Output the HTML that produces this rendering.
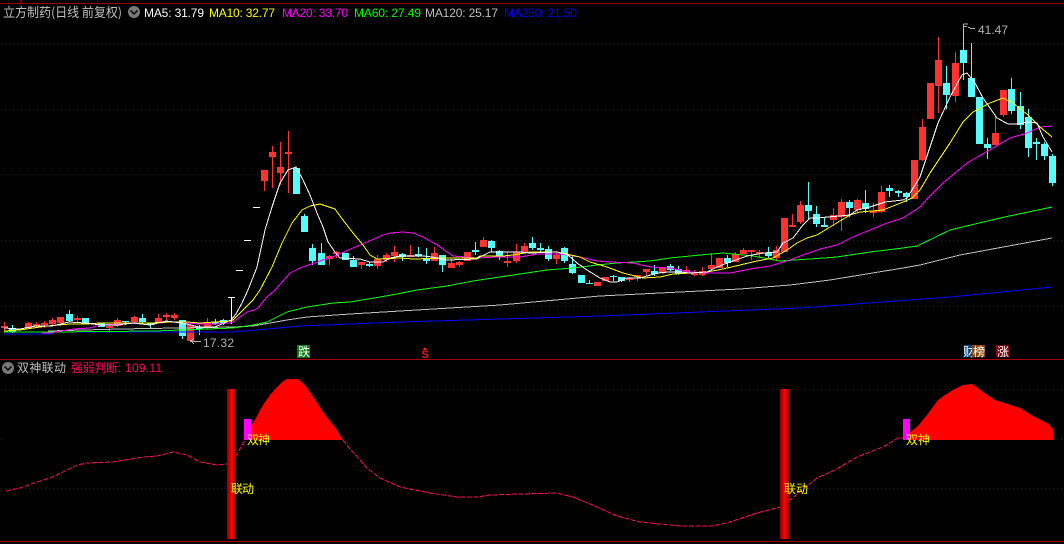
<!DOCTYPE html>
<html lang="zh">
<head>
<meta charset="utf-8">
<title>立方制药</title>
<style>
html,body{margin:0;padding:0;background:#000;width:1064px;height:544px;overflow:hidden}
svg{display:block}
text{font-family:"Liberation Sans","WenQuanYi Zen Hei","Noto Sans CJK SC",sans-serif}
.c{font-family:"WenQuanYi Zen Hei","Noto Sans CJK SC",sans-serif}
.l{fill:none;shape-rendering:crispEdges}
</style>
</head>
<body>
<svg width="1064" height="544" viewBox="0 0 1064 544" xmlns="http://www.w3.org/2000/svg">
<defs>
<linearGradient id="bar" x1="0" x2="1" y1="0" y2="0">
<stop offset="0" stop-color="#900000"/><stop offset=".3" stop-color="#c80000"/><stop offset=".45" stop-color="#ff0000"/><stop offset=".6" stop-color="#ff0000"/><stop offset=".75" stop-color="#c00000"/><stop offset="1" stop-color="#a00000"/>
</linearGradient>
<pattern id="dots" width="4" height="1" patternUnits="userSpaceOnUse" x="1" y="0">
<rect width="1" height="1" fill="#8a0000"/>
</pattern>
</defs>
<rect width="1064" height="544" fill="#000"/>
<!-- frame -->
<path d="M0 3.5H1064M20.5 0V3" stroke="#a00000" stroke-width="1" shape-rendering="crispEdges"/>
<path d="M0 359.5H1064M0 541.5H1064" stroke="#a80000" stroke-width="1" shape-rendering="crispEdges"/>
<!-- grid -->
<g fill="url(#dots)" shape-rendering="crispEdges">
<rect x="0" y="43" width="1064" height="1"/>
<rect x="0" y="109" width="1064" height="1"/>
<rect x="0" y="174" width="1064" height="1"/>
<rect x="0" y="240" width="1064" height="1"/>
<rect x="0" y="306" width="1064" height="1"/>
<rect x="0" y="389" width="1064" height="1"/>
<rect x="0" y="488" width="400" height="1"/>
<rect x="808" y="488" width="256" height="1"/>
<rect x="0" y="439" width="4" height="1"/>
<rect x="1052" y="439" width="12" height="1"/>
</g>

<!-- red wicks -->
<path shape-rendering="crispEdges" stroke="#ff3232" stroke-width="1" fill="none" d="M4.5 322V332M28.5 322V329M36.5 322V327M44.5 321V328M52.5 318V326M77.5 316V323M109.5 324V331M117.5 318V327M134.5 316V323M158.5 314V323M166.5 313V320M174.5 313V320M190.5 322V342M207.5 318V329M264.5 170V191M272.5 146V188M280.5 142V185M288.5 131V193M329.5 255V265M336.5 251V258M361.5 262V269M377.5 255V269M386.5 253V262M394.5 246V262M410.5 245V257M434.5 247V261M451.5 259V268M459.5 261V267M483.5 237V247M507.5 252V267M516.5 244V263M524.5 243V253M556.5 251V264M629.5 277V282M637.5 275V281M646.5 269V276M662.5 267V274M686.5 266V274M694.5 270V276M702.5 267V276M711.5 253V271M735.5 252V262M743.5 248V254M751.5 250V260M759.5 250V257M776.5 246V260M792.5 214V227M800.5 201V224M833.5 208V226M841.5 199V231M857.5 199V212M873.5 203V217M881.5 186V213M922.5 119V161M938.5 37V113M955.5 52V102M995.5 116V145M1003.5 90V117"/>
<!-- red bodies -->
<path shape-rendering="crispEdges" fill="#ff3232" d="M1 326h7v2h-7zM25 323h7v5h-7zM33 324h7v2h-7zM41 323h7v2h-7zM49 320h7v4h-7zM57 317h7v6h-7zM74 318h7v2h-7zM106 326h7v2h-7zM114 320h7v6h-7zM131 317h7v5h-7zM155 318h7v4h-7zM163 315h7v2h-7zM171 315h7v3h-7zM187 325h7v16h-7zM204 322h7v5h-7zM261 170h7v11h-7zM269 152h7v5h-7zM277 167h7v6h-7zM285 152h7v2h-7zM326 256h7v3h-7zM333 252h7v2h-7zM358 262h7v3h-7zM374 259h7v7h-7zM383 255h7v5h-7zM391 252h7v4h-7zM407 255h7v2h-7zM431 253h7v8h-7zM448 263h7v5h-7zM456 262h7v3h-7zM464 252h7v9h-7zM480 240h7v7h-7zM504 261h7v2h-7zM513 252h7v9h-7zM521 246h7v7h-7zM553 255h7v4h-7zM594 282h7v4h-7zM602 277h7v4h-7zM626 278h7v2h-7zM634 275h7v2h-7zM643 269h7v3h-7zM659 268h7v5h-7zM683 270h7v2h-7zM691 272h7v3h-7zM699 271h7v4h-7zM708 265h7v4h-7zM716 258h7v10h-7zM732 254h7v8h-7zM740 250h7v4h-7zM748 250h7v2h-7zM756 252h7v2h-7zM773 250h7v8h-7zM781 218h7v34h-7zM789 225h7v2h-7zM797 205h7v17h-7zM830 215h7v5h-7zM838 202h7v15h-7zM854 200h7v10h-7zM870 211h7v2h-7zM878 192h7v20h-7zM911 160h7v39h-7zM919 127h7v33h-7zM927 83h7v36h-7zM935 60h7v26h-7zM952 63h7v33h-7zM992 133h7v12h-7zM1000 90h7v25h-7z"/>
<!-- cyan wicks -->
<path shape-rendering="crispEdges" stroke="#54fcfc" stroke-width="1" fill="none" d="M12.5 325V333M69.5 310V322M85.5 318V324M125.5 321V325M142.5 314V324M150.5 324V329M182.5 320V339M199.5 325V335M215.5 319V325M223.5 319V325M304.5 214V232M312.5 244V265M321.5 243V265M353.5 256V267M369.5 262V267M402.5 253V261M418.5 247V257M426.5 248V264M442.5 255V272M475.5 242V255M491.5 240V252M499.5 250V260M532.5 237V250M540.5 243V253M548.5 246V261M564.5 247V263M572.5 255V274M589.5 280V284M613.5 275V281M621.5 277V282M654.5 265V276M670.5 264V271M678.5 266V275M727.5 255V267M768.5 247V258M808.5 182V220M816.5 206V227M824.5 217V227M849.5 200V217M865.5 190V213M889.5 185V197M898.5 190V197M906.5 192V202M946.5 66V109M963.5 24V80M971.5 43V97M987.5 138V159M1011.5 78V114M1020.5 92V129M1028.5 109V157M1036.5 138V160M1044.5 142V160M1052.5 154V186"/>
<!-- cyan bodies -->
<path shape-rendering="crispEdges" fill="#54fcfc" d="M9 328h7v4h-7zM66 314h7v7h-7zM82 318h7v5h-7zM98 323h7v4h-7zM122 321h7v1h-7zM139 318h7v4h-7zM147 323h7v2h-7zM179 320h7v16h-7zM196 328h7v1h-7zM212 322h7v2h-7zM220 320h7v3h-7zM293 168h7v26h-7zM301 216h7v16h-7zM309 248h7v13h-7zM318 253h7v12h-7zM342 253h7v7h-7zM350 260h7v7h-7zM366 264h7v2h-7zM399 254h7v3h-7zM415 254h7v2h-7zM423 259h7v2h-7zM439 255h7v10h-7zM472 250h7v2h-7zM488 241h7v7h-7zM496 251h7v6h-7zM529 243h7v5h-7zM537 248h7v2h-7zM545 249h7v10h-7zM561 248h7v13h-7zM569 264h7v9h-7zM578 275h7v8h-7zM586 283h7v1h-7zM610 276h7v1h-7zM618 277h7v4h-7zM651 271h7v3h-7zM667 266h7v4h-7zM675 269h7v5h-7zM724 258h7v5h-7zM765 253h7v3h-7zM805 205h7v6h-7zM813 214h7v10h-7zM821 225h7v2h-7zM846 202h7v6h-7zM862 203h7v6h-7zM886 188h7v3h-7zM895 191h7v2h-7zM903 193h7v4h-7zM943 83h7v12h-7zM960 50h7v13h-7zM968 78h7v19h-7zM976 97h7v47h-7zM984 144h7v4h-7zM1008 89h7v22h-7zM1017 106h7v19h-7zM1025 117h7v31h-7zM1033 142h7v2h-7zM1041 144h7v12h-7zM1049 156h7v27h-7z"/>
<!-- white limit-up marks -->
<path shape-rendering="crispEdges" stroke="#fff" stroke-width="1" fill="none" d="M231.5 297V324M228 297.5H235M236 270.5H243M244 240.5H251M253 207.5H260"/>

<!-- MA250 -->
<polyline class="l" stroke="#0000ff" stroke-width="1" points="4,334 50,334 52,332 232,332 267,329 300,326 350,324 400,322 600,316 800,308 950,297 1052,287"/>
<!-- MA120 -->
<polyline class="l" stroke="#c0c0c0" stroke-width="1" points="48,331 120,329 233,327 253,326 287,320 307,317 350,314 500,305 600,296 740,289 790,285 830,280 903,268 920,265 960,255 1052,238"/>
<!-- MA60 -->
<polyline class="l" stroke="#00ff00" stroke-width="1" points="4,332 50,332 155,331 233,328 253,325 267,322 287,312 307,307 333,303 350,302 380,297 397,294 417,290 447,286 473,281 493,278 520,274 547,270 573,268 597,265 617,263 650,261 670,258 700,255 723,253 753,256 780,261 810,259 837,257 870,252 903,248 917,246 950,230 1000,218 1052,207"/>
<!-- MA20 -->
<polyline class="l" stroke="#ff00ff" stroke-width="1" points="42,333 53,333 55,332 73,329 90,328 100,325 120,324 140,323 160,323 170,322 200,324 213,324 230,323 233,322 247,312 257,309 267,297 275,290 290,273 300,268 323,260 337,255 353,248 367,242 383,235 390,233 403,232 413,233 423,237 437,245 453,256 477,258 497,257 520,257 537,254 560,254 580,257 597,261 610,262 633,263 650,267 670,268 690,272 707,273 730,273 750,269 770,266 790,260 803,255 820,249 837,245 853,237 870,230 887,223 903,218 920,207 928,198 943,183 967,163 993,148 1010,138 1027,133 1040,127 1052,126"/>
<!-- MA10 -->
<polyline class="l" stroke="#ffff00" stroke-width="1" points="4,331 20,330 33,328 47,326 70,324 87,324 100,323 123,323 150,323 170,322 187,322 200,323 230,321 233,320 243,310 253,300 260,290 272,267 282,243 292,223 302,210 310,206 320,204 335,209 343,220 353,233 363,245 370,255 377,259 400,258 413,259 447,258 477,258 480,256 503,256 513,255 530,252 557,252 580,257 590,262 607,267 623,273 643,278 660,277 673,274 690,273 707,272 723,269 740,265 757,261 773,258 787,250 797,243 807,238 817,235 830,227 850,215 860,212 883,210 903,202 912,198 920,190 930,173 940,158 950,143 963,122 973,112 990,103 1003,98 1013,103 1028,115 1040,127 1052,137"/>
<!-- MA5 -->
<polyline class="l" stroke="#ffffff" stroke-width="1" points="4,328 20,329 36,326 52,326 69,322 85,323 101,325 117,325 133,323 150,325 166,321 182,323 199,327 215,327 231,320 236,314 242,303 248,290 257,267 265,230 272,207 280,183 288,170 296,167 303,180 310,195 317,213 323,227 328,242 335,252 340,258 360,259 370,262 383,262 390,258 400,256 423,256 432,257 447,260 477,259 480,257 490,252 520,252 530,253 557,252 568,255 577,263 587,270 600,278 610,282 617,282 627,278 640,278 647,276 658,273 668,272 680,272 690,273 707,272 717,267 730,262 747,256 763,253 777,252 783,243 793,238 803,225 810,218 817,218 850,215 857,210 870,207 885,202 903,200 907,198 920,177 928,153 938,123 950,97 962,75 967,73 975,83 983,98 997,118 1008,124 1017,124 1028,122 1037,123 1043,137 1052,152"/>

<!-- header -->
<text class="c" x="3" y="17" font-size="13" fill="#c0c0c0" textLength="119" lengthAdjust="spacingAndGlyphs">立方制药(日线 前复权)</text>
<circle cx="134" cy="12" r="6" fill="#7a7a7a"/>
<path d="M130.5 10.5L134 14L137.5 10.5" fill="none" stroke="#111" stroke-width="1.6"/>
<text x="144" y="17" font-size="12" fill="#fff" textLength="60">MA5: 31.79</text>
<text x="209" y="17" font-size="12" fill="#ffff00" textLength="66">MA10: 32.77</text>
<text x="282" y="17" font-size="12" fill="#ff00ff" textLength="66">MA20: 33.70</text>
<text x="354" y="17" font-size="12" fill="#00ff00" textLength="67">MA60: 27.49</text>
<text x="425" y="17" font-size="12" fill="#c0c0c0" textLength="73">MA120: 25.17</text>
<text x="504" y="17" font-size="12" fill="#0000ff" textLength="73">MA250: 21.50</text>

<!-- high / low annotations -->
<text x="978" y="34" font-size="12" fill="#b4b4b4" textLength="30">41.47</text>
<path shape-rendering="crispEdges" d="M963.5 24H968M963.5 24V29M964 26.5H967M968 27.5H970M970 28.5H975" stroke="#b4b4b4" stroke-width="1" fill="none"/>
<text x="203" y="347" font-size="12" fill="#b4b4b4" textLength="31">17.32</text>
<path shape-rendering="crispEdges" d="M190 341.5H201M190 340.5h2M192 339.5h1M192 342.5h1M193 343.5h1M193 338.5h1" stroke="#b4b4b4" stroke-width="1" fill="none"/>

<!-- event tags -->
<rect x="297" y="345" width="13" height="13" fill="#0a7a12"/>
<text class="c" x="298" y="356" font-size="12" fill="#fff">跌</text>
<path d="M425 347l2.5 3h-5z" fill="#ff1414"/>
<text x="421.5" y="358" font-size="11" font-weight="bold" fill="#ff1414">S</text>
<rect x="964" y="345" width="8" height="12" fill="#0a4a80"/>
<text class="c" x="963" y="356" font-size="12" fill="#fff">财</text>
<rect x="972" y="345" width="13" height="12" fill="#8b4a10"/>
<text class="c" x="973" y="356" font-size="12" fill="#fff">榜</text>
<rect x="996" y="345" width="13" height="12" fill="#800010"/>
<text class="c" x="997" y="356" font-size="12" fill="#fff">涨</text>

<!-- indicator header -->
<circle cx="8" cy="368" r="6" fill="#7a7a7a"/>
<path d="M4.5 366.5L8 370L11.5 366.5" fill="none" stroke="#111" stroke-width="1.6"/>
<text class="c" x="17" y="372" font-size="12" fill="#c0c0c0" textLength="49">双神联动</text>
<text class="c" x="71" y="372" font-size="12" fill="#ff0a5a" textLength="47">强弱判断</text>
<text x="118" y="372" font-size="12" fill="#ff0a5a" textLength="44">: 109.11</text>

<!-- indicator area -->
<polygon shape-rendering="crispEdges" fill="#ff0000" points="250,440 251,427 257,416 263,405 270,395 277,387 282,382 287,379 298,379 304,384 310,392 316,401 323,412 330,421 337,430 343,440"/>
<polygon shape-rendering="crispEdges" fill="#ff0000" points="910,440 910,432 917,427 927,415 938,400 945,395 953,390 963,385 972,384 978,388 983,392 995,400 1007,404 1020,408 1033,416 1047,423 1053,429 1053,440"/>
<rect x="244" y="419" width="7" height="21" fill="#ff00ff"/>
<rect x="903" y="419" width="7" height="21" fill="#ff00ff"/>
<polyline class="l" stroke="#ff0a55" stroke-width="1" stroke-dasharray="5 1.5" points="6,491 20,488 37,482 50,478 63,472 77,465 87,463 113,462 143,457 157,456 173,452 187,455 200,462 217,465 227,464 237,454 245,440"/>
<polyline class="l" stroke="#ff0a55" stroke-width="1" stroke-dasharray="5 1.5" points="343,440 350,449 360,460 367,468 380,478 400,487 430,493 457,497 477,497 490,495 520,494 557,493 573,497 597,507 617,516 640,522 680,526 713,526 730,522 757,513 780,507 790,500 817,478 835,470 857,457 883,447 898,438 903,438"/>
<rect x="227" y="389" width="9" height="150" fill="url(#bar)"/>
<rect x="780" y="389" width="9" height="150" fill="url(#bar)"/>
<text class="c" x="247" y="444" font-size="12" fill="#ffff00" textLength="23">双神</text>
<text class="c" x="231" y="493" font-size="12" fill="#ffff00" textLength="23">联动</text>
<text class="c" x="906" y="444" font-size="12" fill="#ffff00" textLength="24">双神</text>
<text class="c" x="784" y="493" font-size="12" fill="#ffff00" textLength="24">联动</text>
</svg>
</body>
</html>
